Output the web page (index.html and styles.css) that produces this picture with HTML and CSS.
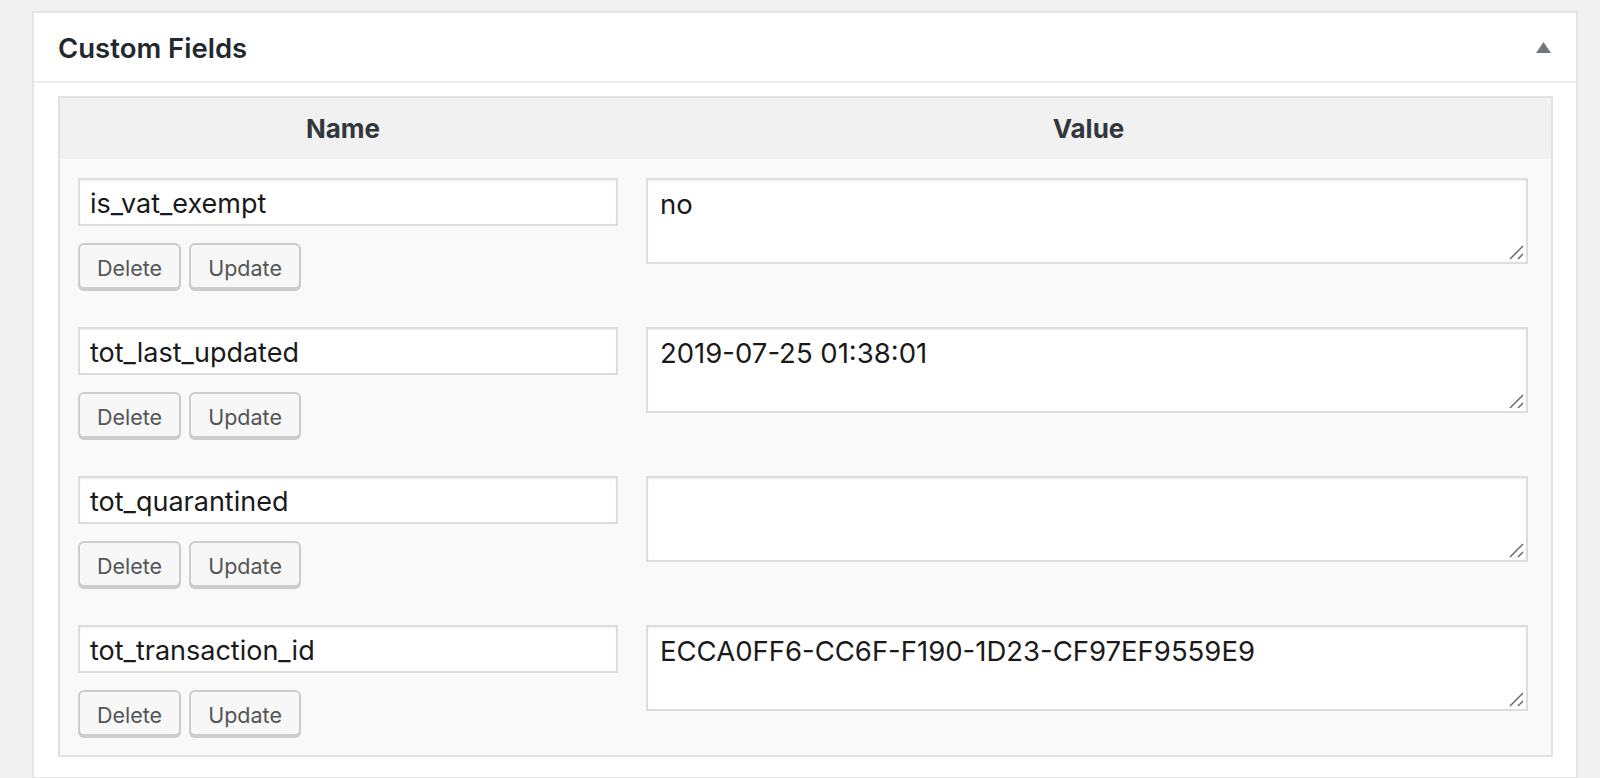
FILE: index.html
```html
<!DOCTYPE html>
<html lang="en">
<head>
<meta charset="utf-8">
<title>Custom Fields</title>
<link rel="stylesheet" href="styles.css">
</head>
<body>
<div class="postbox">
  <div class="postbox-header">
    <h2 class="title">Custom Fields</h2>
    <svg class="toggle" width="15" height="11" viewBox="0 0 15 11"><polygon points="7.5,0 15,11 0,11" fill="#72777c"/></svg>
  </div>
  <div class="inside">
    <div class="list-table">
      <div class="thead">
        <div class="th">Name</div>
        <div class="th">Value</div>
      </div>
      <div class="row">
        <div class="cell-name">
          <div class="field">is_vat_exempt</div>
          <div class="actions"><span class="button">Delete</span><span class="button">Update</span></div>
        </div>
        <div class="cell-value">
          <div class="textarea">no<svg class="grip" width="16" height="16" viewBox="0 0 16 16"><line x1="2" y1="15" x2="15" y2="2"/><line x1="10" y1="15" x2="15" y2="10"/></svg></div>
        </div>
      </div>
      <div class="row">
        <div class="cell-name">
          <div class="field">tot_last_updated</div>
          <div class="actions"><span class="button">Delete</span><span class="button">Update</span></div>
        </div>
        <div class="cell-value">
          <div class="textarea">2019-07-25 01:38:01<svg class="grip" width="16" height="16" viewBox="0 0 16 16"><line x1="2" y1="15" x2="15" y2="2"/><line x1="10" y1="15" x2="15" y2="10"/></svg></div>
        </div>
      </div>
      <div class="row">
        <div class="cell-name">
          <div class="field">tot_quarantined</div>
          <div class="actions"><span class="button">Delete</span><span class="button">Update</span></div>
        </div>
        <div class="cell-value">
          <div class="textarea"><svg class="grip" width="16" height="16" viewBox="0 0 16 16"><line x1="2" y1="15" x2="15" y2="2"/><line x1="10" y1="15" x2="15" y2="10"/></svg></div>
        </div>
      </div>
      <div class="row">
        <div class="cell-name">
          <div class="field">tot_transaction_id</div>
          <div class="actions"><span class="button">Delete</span><span class="button">Update</span></div>
        </div>
        <div class="cell-value">
          <div class="textarea">ECCA0FF6-CC6F-F190-1D23-CF97EF9559E9<svg class="grip" width="16" height="16" viewBox="0 0 16 16"><line x1="2" y1="15" x2="15" y2="2"/><line x1="10" y1="15" x2="15" y2="10"/></svg></div>
        </div>
      </div>
    </div>
  </div>
</div>
</body>
</html>
```
FILE: styles.css
```css
html, body {
  margin: 0;
  padding: 0;
}
body {
  background: #f1f1f1;
  font-family: Inter, "Liberation Sans", Arial, sans-serif;
  color: #32373c;
  padding: 11px 0 0 32px;
  height: 778px;
  box-sizing: border-box;
  overflow: hidden;
}
.postbox {
  width: 1546px;
  box-sizing: border-box;
  background: #fff;
  border: 2px solid #e5e5e5;
  box-shadow: 0 1px 1px rgba(0,0,0,0.04);
}
.postbox-header {
  display: flex;
  align-items: center;
  justify-content: space-between;
  height: 68px;
  padding: 0 25px 0 24px;
  border-bottom: 2px solid #eeeeee;
}
.title {
  margin: 0;
  font-size: 27.5px;
  font-weight: 600;
  color: #23282d;
  padding-top: 2px;
}
.toggle {
  display: block;
}
.inside {
  padding: 13px 23px 20px 24px;
}
.list-table {
  border: 2px solid #e1e1e1;
  background: #f9f9f9;
}
.thead {
  display: grid;
  grid-template-columns: 566px 1fr;
  height: 61px;
  background: #f1f1f1;
  align-items: center;
}
.th {
  text-align: center;
  font-weight: 700;
  font-size: 26px;
  color: #32373c;
}
.row {
  display: grid;
  grid-template-columns: 566px 1fr;
  padding: 19px 0 19px;
}
.cell-name {
  padding-left: 18px;
}
.cell-value {
  padding-left: 20px;
}
.field {
  width: 540px;
  height: 48px;
  box-sizing: border-box;
  background: #fff;
  border: 2px solid #dddddd;
  box-shadow: inset 0 1px 2px rgba(0,0,0,0.07);
  padding: 3px 10px 0;
  font-size: 27px;
  line-height: 41px;
  color: #1a1a1a;
}
.actions {
  display: flex;
  gap: 8px;
  margin-top: 17px;
}
.button {
  display: block;
  height: 46px;
  box-sizing: border-box;
  padding: 4px 17px 0;
  background: #f7f7f7;
  border: 2px solid #cccccc;
  border-radius: 6px;
  box-shadow: 0 2px 0 #cccccc;
  font-size: 21.5px;
  line-height: 38px;
  color: #555555;
}
.textarea {
  position: relative;
  width: 882px;
  height: 86px;
  box-sizing: border-box;
  background: #fff;
  border: 2px solid #dddddd;
  box-shadow: inset 0 1px 2px rgba(0,0,0,0.07);
  padding: 3.5px 12px;
  font-size: 27.5px;
  line-height: 40px;
  color: #1a1a1a;
}
.grip {
  position: absolute;
  right: 2px;
  bottom: 2px;
}
.grip line {
  stroke: #666;
  stroke-width: 1.4;
}
```
